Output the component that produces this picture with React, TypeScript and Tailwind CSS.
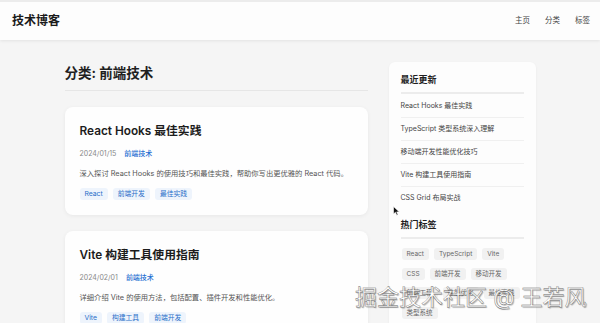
export default function App() {
  const posts = [
    {
      title: 'React Hooks 最佳实践',
      date: '2024/01/15',
      category: '前端技术',
      desc: '深入探讨 React Hooks 的使用技巧和最佳实践，帮助你写出更优雅的 React 代码。',
      tags: ['React', '前端开发', '最佳实践'],
    },
    {
      title: 'Vite 构建工具使用指南',
      date: '2024/02/01',
      category: '前端技术',
      desc: '详细介绍 Vite 的使用方法，包括配置、插件开发和性能优化。',
      tags: ['Vite', '构建工具', '前端开发'],
    },
  ];

  const recent = [
    'React Hooks 最佳实践',
    'TypeScript 类型系统深入理解',
    '移动端开发性能优化技巧',
    'Vite 构建工具使用指南',
    'CSS Grid 布局实战',
  ];

  const hotTags = ['React', 'TypeScript', 'Vite', 'CSS', '前端开发', '移动开发', '前端工程', '性能优化', '最佳实践', '类型系统'];

  return (
    <div className="relative h-[323px] overflow-hidden bg-[#f5f5f5] font-['Inter','Noto_Sans_CJK_SC',sans-serif] text-[#222]">
      {/* Header */}
      <header className="flex h-[40px] items-center justify-between border-t-2 border-[#ececec] bg-[#fdfdfd] pl-[12px] pr-[10px] shadow-[0_1px_3px_rgba(0,0,0,0.08)]">
        <h1 className="text-[12px] font-bold leading-none text-[#1a1a1a]">技术博客</h1>
        <nav className="flex gap-[15px] text-[7.5px] text-[#444]">
          <a>主页</a>
          <a>分类</a>
          <a>标签</a>
        </nav>
      </header>

      <div className="mx-auto flex w-[471px] gap-[21px]">
        {/* Main column */}
        <main className="w-[303px] shrink-0 pt-[23px]">
          <h2 className="border-b border-[#e6e6e6] pb-[7px] text-[13.5px] font-bold leading-[20px] text-[#1f1f1f]">
            分类: 前端技术
          </h2>
          <div className="mt-[16px] flex flex-col gap-[16px]">
            {posts.map((p) => (
              <article
                key={p.title}
                className="rounded-[8px] bg-[#fefefe] px-[15px] pb-[15px] pt-[17px] shadow-[0_1px_4px_rgba(0,0,0,0.06)]"
              >
                <h3 className="text-[11.8px] font-semibold leading-[14px] text-[#1c1c1c]">{p.title}</h3>
                <div className="mt-[11px] flex items-center gap-[8px] text-[7px] leading-[10px]">
                  <span className="text-[#888]">{p.date}</span>
                  <span className="font-medium text-[#1f6fd1]">{p.category}</span>
                </div>
                <p className="mt-[10px] text-[7.3px] leading-[10px] text-[#555]">{p.desc}</p>
                <div className="mt-[9px] flex gap-[5px]">
                  {p.tags.map((t) => (
                    <span
                      key={t}
                      className="rounded-[3px] bg-[#eef4fc] px-[5px] text-[6.8px] leading-[12px] text-[#2a6fc9]"
                    >
                      {t}
                    </span>
                  ))}
                </div>
              </article>
            ))}
          </div>
        </main>

        {/* Sidebar */}
        <aside className="mt-[22px] w-[147px] self-start rounded-[6px] bg-[#fdfdfd] px-[12px] pb-[12px] pt-[12px] shadow-[0_1px_3px_rgba(0,0,0,0.05)]">
          <h4 className="border-b-2 border-[#ececec] pb-[6px] text-[9px] font-bold leading-[12px] text-[#1f1f1f]">最近更新</h4>
          <ul className="mt-px">
            {recent.map((r, i) => (
              <li
                key={r}
                className={`py-[6px] text-[7px] leading-[10px] text-[#444] ${i < recent.length - 1 ? 'border-b border-[#f0f0f0]' : ''}`}
              >
                {r}
              </li>
            ))}
          </ul>
          <h4 className="mt-[10px] border-b-2 border-[#ececec] pb-[6px] text-[9px] font-bold leading-[12px] text-[#1f1f1f]">热门标签</h4>
          <div className="mt-[9px] flex flex-wrap gap-x-[5px] gap-y-[7.5px] pl-px">
            {hotTags.map((t) => (
              <span key={t} className="rounded-[3px] bg-[#f1f1f1] px-[5px] text-[6.5px] leading-[12px] text-[#666]">
                {t}
              </span>
            ))}
          </div>
        </aside>
      </div>

      {/* Cursor */}
      <svg className="absolute left-[393px] top-[206px]" width="7" height="10" viewBox="0 0 7 10">
        <path d="M0.5 0.5 L0.5 8 L2.4 6.3 L3.8 9.3 L5 8.8 L3.7 5.9 L6.3 5.9 Z" fill="#111" stroke="#fff" strokeWidth="0.6" />
      </svg>

      {/* Watermark */}
      <div className="pointer-events-none absolute left-[355px] top-[284px] whitespace-nowrap text-[22px] leading-[26px] text-white [-webkit-text-stroke:0.4px_#666] [text-shadow:1px_1px_1px_rgba(0,0,0,0.3)]">
        掘金技术社区 @ 王若风
      </div>
    </div>
  );
}
